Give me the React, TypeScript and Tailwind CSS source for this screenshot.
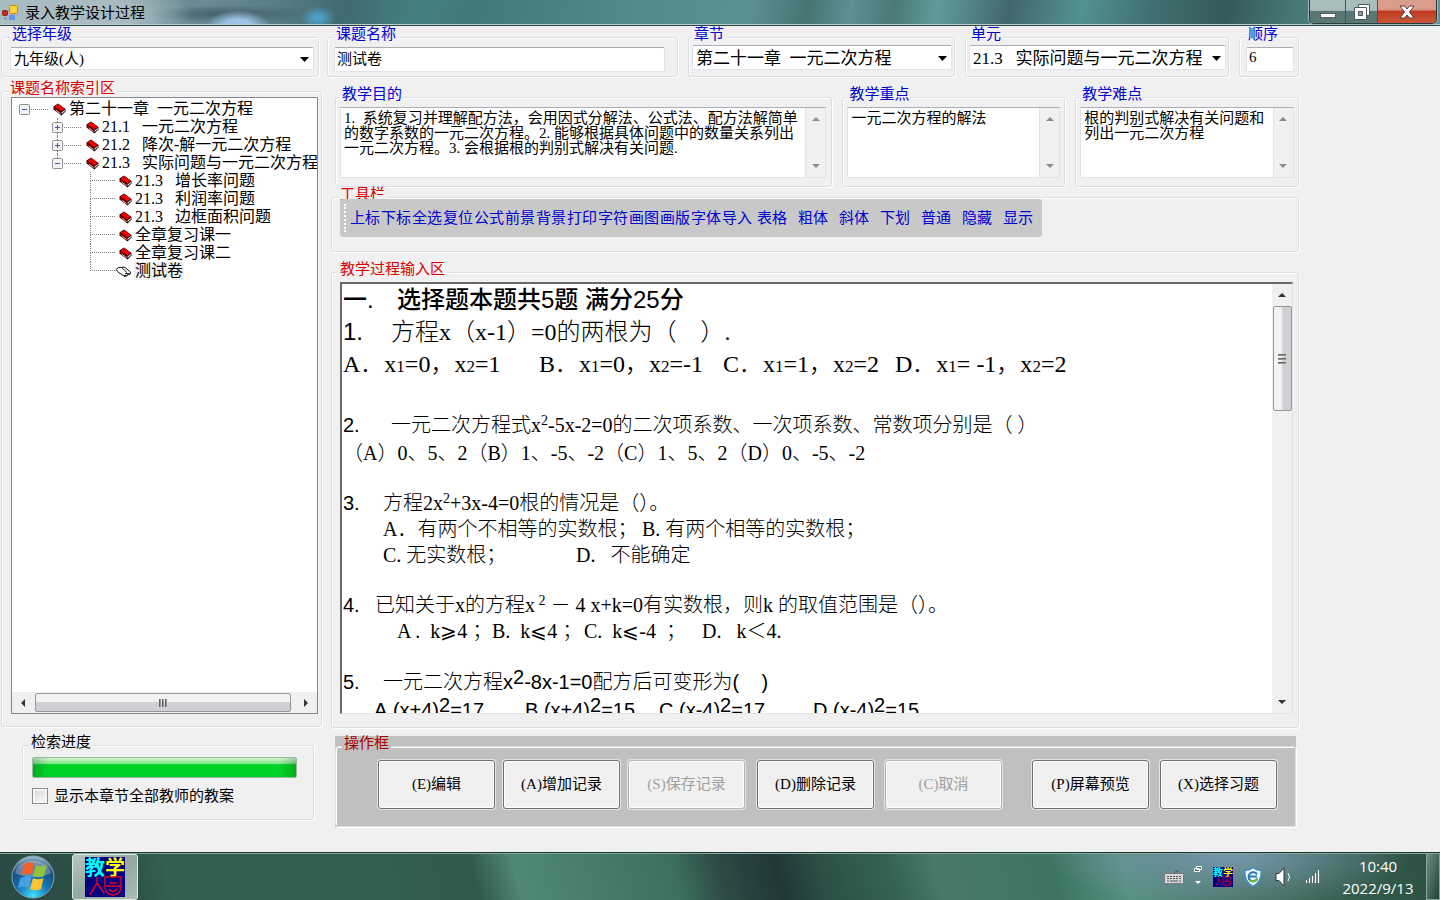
import type { ReactNode } from "react";

const ui = "font-['Liberation_Serif','Noto_Sans_CJK_SC',serif]";
const hei = "font-['Liberation_Sans','Noto_Sans_CJK_SC',sans-serif]";

type Tone = "blue" | "red" | "black" | "darkred";

const tones = {
  blue: "text-[#0000d0]",
  red: "text-[#d80000]",
  black: "text-black",
  darkred: "text-[#a80000]",
};

interface GroupProps {
  title: string;
  tone?: Tone;
  className?: string;
  legendBg?: string;
  children: ReactNode;
}

function Group({ title, tone = "blue", className = "", legendBg = "bg-[#f0f0f0]", children }: GroupProps) {
  return (
    <fieldset
      className={`min-w-0 rounded-[3px] border border-[#d5dfe5] px-[6px] shadow-[1px_1px_0_#fff,inset_1px_1px_0_#fff] ${className}`}
    >
      <legend className={`px-[2px] pb-[6px] text-[15px] leading-[14px] ${legendBg} ${tones[tone]}`}>{title}</legend>
      {children}
    </fieldset>
  );
}

const fieldBorder = "border border-[#e2e3ea] border-t-[#abadb3] bg-white";

function Combo({ label, value, className }: { label: string; value: string; className: string }) {
  return (
    <div className="relative">
      <select
        aria-label={label}
        className={`block w-full appearance-none overflow-hidden rounded-[2px] pl-[3px] text-black outline-none ${fieldBorder} ${className}`}
      >
        <option>{value}</option>
      </select>
      <svg className="pointer-events-none absolute top-1/2 right-[5px] -mt-[2px]" width="9" height="5" viewBox="0 0 9 5">
        <path d="M0 0h9L4.5 5z" fill="#000" />
      </svg>
    </div>
  );
}

function Arrow({ dir, muted }: { dir: "up" | "down" | "left" | "right"; muted?: boolean }) {
  const paths = {
    up: "M1 7h8L5 3z",
    down: "M1 3h8L5 7z",
    left: "M7 1v8L3 5z",
    right: "M3 1v8l4-4z",
  };
  return (
    <svg width="10" height="10" viewBox="0 0 10 10">
      <path d={paths[dir]} fill={muted ? "#8a8d90" : "#333"} />
    </svg>
  );
}

function Note({ label, value }: { label: string; value: string }) {
  return (
    <div className={`mb-2 flex h-[71px] ${fieldBorder}`}>
      <textarea
        aria-label={label}
        defaultValue={value}
        wrap="off"
        className="block min-w-0 flex-1 resize-none overflow-hidden pt-[3px] pl-[3px] text-[15px] leading-[15px] text-black outline-none"
      />
      <div className="flex w-5 shrink-0 flex-col items-center justify-between border-l border-[#e3e3e3] bg-[#f0f0f0] py-[6px]">
        <Arrow dir="up" muted />
        <Arrow dir="down" muted />
      </div>
    </div>
  );
}

function Book() {
  return (
    <svg width="13" height="13" viewBox="0 0 13 13" className="shrink-0">
      <path d="M.5 3.500 5 .500l7.500 5.500v2.500L8.500 12.500.5 6.500z" fill="#1a0000" />
      <path d="M1.500 3.500 5.200 1 11.800 6 8.200 8.500z" fill="#f00000" />
      <path d="M8.500 9.500 12 7v1l-3.500 3z" fill="#f4f4f4" />
      <path d="M1.200 4.500 7.600 9.500v1.700L1.200 6.200z" fill="#c80000" />
      <path d="M3 7.300 7.500 10.700" stroke="#ddd" strokeWidth=".8" />
    </svg>
  );
}

function OpenBook() {
  return (
    <svg width="17" height="13" viewBox="0 0 17 13" className="-ml-1 shrink-0">
      <path
        d="M1 4.500Q3 1.500 6.500 2.500 8 1.500 10 2.500l5.500 4.500q.5 2-2.500 2.500-1 1.500-3 1-2 .500-3-1-3-.500-6-5z"
        fill="#fff"
        stroke="#111"
      />
      <path d="M6.500 2.500 12 7.500M10 8.500h3.500M9 11.500q3 0 4-2l2.500-.500" stroke="#111" fill="none" />
    </svg>
  );
}

function Expander({ open, top, bottom }: { open: boolean; top?: boolean; bottom?: boolean }) {
  return (
    <span className="flex h-[18px] w-[11px] shrink-0 flex-col items-center">
      <span className={`h-1 w-px ${top ? "border-l border-dotted border-[#808080]" : ""}`} />
      <svg width="11" height="11" viewBox="0 0 11 11" className="shrink-0">
        <rect x=".5" y=".5" width="10" height="10" rx="1" fill="#f3f3f3" stroke="#919191" />
        <path d={open ? "M3 5.500h5" : "M3 5.500h5M5.500 3v5"} stroke="#3a5ba5" />
      </svg>
      <span className={`h-[3px] w-px ${bottom ? "border-l border-dotted border-[#808080]" : ""}`} />
    </span>
  );
}

const dots = "border-dotted border-[#808080]";

function BranchRow({ open, top, bottom, label }: { open: boolean; top?: boolean; bottom?: boolean; label: string }) {
  return (
    <div className="flex h-[18px] items-center whitespace-nowrap">
      <Expander open={open} top={top} bottom={bottom} />
      <span className={`mr-[5px] ml-px w-[17px] shrink-0 border-t ${dots}`} />
      <Book />
      <span className="ml-[3px]">{label}</span>
    </div>
  );
}

function LeafRow({ label, last }: { label: string; last?: boolean }) {
  return (
    <li className="flex h-[18px] items-center whitespace-nowrap">
      <span className="mr-1 w-[25px] shrink-0">
        <span className={`block h-[9px] border-b border-l ${dots}`} />
        <span className={`block h-[9px] ${last ? "" : `border-l ${dots}`}`} />
      </span>
      {last ? <OpenBook /> : <Book />}
      <span className={last ? "ml-[2px] bg-[#f0f0f0] px-px" : "ml-[3px]"}>{label}</span>
    </li>
  );
}

const leaves = [
  "21.3 \u2002增长率问题",
  "21.3 \u2002利润率问题",
  "21.3 \u2002边框面积问题",
  "全章复习课一",
  "全章复习课二",
  "测试卷",
];

function Tree() {
  return (
    <div className="-mt-1 mr-[-3px] mb-3 ml-[3px] flex min-h-0 flex-1 flex-col border border-[#828790] bg-white">
      <ul className="min-h-0 flex-1 overflow-hidden pt-[2px] pl-[7px] text-[16px] leading-[18px]">
        <li>
          <BranchRow open label={"第二十一章\u2002一元二次方程"} />
          <ul className="pl-[33px]">
            <li>
              <BranchRow open={false} top bottom label={"21.1 \u2002一元二次方程"} />
            </li>
            <li>
              <BranchRow open={false} top bottom label={"21.2 \u2002降次-解一元二次方程"} />
            </li>
            <li>
              <BranchRow open top label={"21.3 \u2002实际问题与一元二次方程"} />
              <ul className="pl-[38px]">
                {leaves.map((leaf, i) => (
                  <LeafRow key={leaf} label={leaf} last={i === leaves.length - 1} />
                ))}
              </ul>
            </li>
          </ul>
        </li>
      </ul>
      <div className="flex h-[21px] shrink-0 items-center bg-[#f0f0f0] px-[6px]">
        <Arrow dir="left" />
        <div className="mr-[10px] ml-[7px] flex h-[19px] flex-1 items-center justify-center gap-px rounded-[2px] border border-[#979797] bg-linear-to-b from-[#f3f3f3] from-45% to-[#cfd0d3] to-50%">
          <span className="h-2 w-[2px] border-r border-[#999] bg-[#666]" />
          <span className="h-2 w-[2px] border-r border-[#999] bg-[#666]" />
          <span className="h-2 w-[2px] border-r border-[#999] bg-[#666]" />
        </div>
        <Arrow dir="right" />
      </div>
    </div>
  );
}

const tightTools = ["上标", "下标", "全选", "复位", "公式", "前景", "背景", "打印", "字符", "画图", "画版", "字体", "导入"];
const looseTools = ["表格", "粗体", "斜体", "下划", "普通", "隐藏", "显示"];

function Toolbar() {
  return (
    <div className="relative -mt-2 mb-[14px] ml-[2px] flex h-[38px] w-[702px] items-center rounded-[3px] bg-[#c8c8c8] pl-1 text-[15px] leading-5 text-[#0000d0]">
      <span className="mr-1 h-[28px] border-l-2 border-dotted border-white" />
      <div className="flex gap-px">
        {tightTools.map((t) => (
          <button key={t} type="button" className="w-[30px] whitespace-nowrap">
            {t}
          </button>
        ))}
      </div>
      <div className="ml-[5px] flex gap-[11px]">
        {looseTools.map((t) => (
          <button key={t} type="button" className="w-[30px] whitespace-nowrap">
            {t}
          </button>
        ))}
      </div>
    </div>
  );
}

function Sub({ children }: { children: ReactNode }) {
  return <span className="text-[17px]">{children}</span>;
}

function Sup({ children }: { children: ReactNode }) {
  return <sup className="text-[14px]">{children}</sup>;
}

function BigSup({ children }: { children: ReactNode }) {
  return <sup className="-top-[5px] text-[20px]">{children}</sup>;
}

interface LineProps {
  no?: string;
  indent?: string;
  className?: string;
  children?: ReactNode;
}

function Line({ no, indent = "w-10", className = "h-[26px] leading-[26px] text-[20px]", children }: LineProps) {
  return (
    <p className={`flex whitespace-pre ${className}`}>
      <span className={`shrink-0 ${indent} ${hei}`}>{no}</span>
      {children}
    </p>
  );
}

function Editor() {
  return (
    <div className="mr-[-1px] mb-[13px] ml-[2px] flex min-h-0 flex-1 border-t-2 border-r border-b border-l-2 border-t-[#696969] border-r-[#e3e3e3] border-b-[#e3e3e3] border-l-[#696969] bg-white">
      <div
        role="textbox"
        aria-label="教学过程输入区"
        tabIndex={0}
        className="min-h-0 min-w-0 flex-1 overflow-hidden pl-px font-light text-black"
      >
        <Line no="一." indent="w-[54px]" className={`h-8 text-[24px] leading-8 font-medium ${hei}`}>
          选择题本题共5题 满分25分
        </Line>
        <Line no="1." indent="w-12" className="h-8 text-[24px] leading-8">
          方程x（x-1）=0的两根为（    ）.
        </Line>
        <Line indent="w-0" className="h-8 text-[24px] leading-8">
          <span className="w-[196px]">A．x<Sub>1</Sub>=0，x<Sub>2</Sub>=1</span>
          <span className="w-[184px]">B．x<Sub>1</Sub>=0，x<Sub>2</Sub>=-1</span>
          <span className="w-[172px]">C．x<Sub>1</Sub>=1，x<Sub>2</Sub>=2</span>
          <span>D．x<Sub>1</Sub>= -1，x<Sub>2</Sub>=2</span>
        </Line>
        <Line indent="w-0" className="h-[30px]" />
        <Line no="2." indent="w-12" className="h-[30px] text-[20px] leading-[30px]">
          <span>一元二次方程式x<Sup>2</Sup>-5x-2=0的二次项系数、一次项系数、常数项分别是（ ）</span>
        </Line>
        <Line indent="w-0">（A）0、5、2（B）1、-5、-2（C）1、5、2（D）0、-5、-2</Line>
        <Line indent="w-0" className="h-6" />
        <Line no="3.">
          <span>方程2x<Sup>2</Sup>+3x-4=0根的情况是（）。</span>
        </Line>
        <Line>
          <span className="w-[259px]">A．有两个不相等的实数根；</span>
          <span>B. 有两个相等的实数根；</span>
        </Line>
        <Line>
          <span className="w-[193px]">C. 无实数根；</span>
          <span>D.   不能确定</span>
        </Line>
        <Line indent="w-0" className="h-6" />
        <Line no="4." indent="w-8">
          <span>已知关于x的方程x<Sup> 2</Sup> － 4 x+k=0有实数根，则k 的取值范围是（）。</span>
        </Line>
        <Line indent="w-[54px]">
          <span className="w-[95px]">A .  k⩾4 ；</span>
          <span className="w-[92px]">B.  k⩽4 ；</span>
          <span className="w-[118px]">C.  k⩽-4  ；</span>
          <span>D.   k＜4.</span>
        </Line>
        <Line indent="w-0" className="h-6" />
        <Line no="5." className="h-7 text-[20px] leading-7">
          <span className={hei}>一元二次方程x<BigSup>2</BigSup>-8x-1=0配方后可变形为(    )</span>
        </Line>
        <Line indent="w-[31px]" className={`h-7 text-[20px] leading-7 ${hei}`}>
          <span className="w-[151px]">A.(x+4)<BigSup>2</BigSup>=17</span>
          <span className="w-[134px]">B.(x+4)<BigSup>2</BigSup>=15</span>
          <span className="w-[154px]">C.(x-4)<BigSup>2</BigSup>=17</span>
          <span>D.(x-4)<BigSup>2</BigSup>=15</span>
        </Line>
      </div>
      <div className="flex w-5 shrink-0 flex-col items-center bg-[#f0f0f0] py-[6px]">
        <Arrow dir="up" />
        <div className="mt-[6px] mb-auto flex h-[105px] w-[19px] flex-col items-center justify-center gap-[2px] rounded-[2px] border border-[#979797] bg-linear-to-r from-[#f3f3f3] from-40% to-[#cfd0d3] to-55%">
          <span className="h-[2px] w-2 border-b border-[#999] bg-[#666]" />
          <span className="h-[2px] w-2 border-b border-[#999] bg-[#666]" />
          <span className="h-[2px] w-2 border-b border-[#999] bg-[#666]" />
        </div>
        <Arrow dir="down" />
      </div>
    </div>
  );
}

function Action({ label, disabled }: { label: string; disabled?: boolean }) {
  return (
    <button
      type="button"
      disabled={disabled}
      className="h-[49px] w-[117px] rounded-[3px] border border-[#707070] bg-[#f0f0f0] text-[15px] text-black shadow-[0_0_0_1px_#e4e4e4,inset_0_0_0_1px_#fff] disabled:border-[#b4b4b4] disabled:text-[#a0a0a0]"
    >
      {label}
    </button>
  );
}

function TeachIcon({ size }: { size: number }) {
  return (
    <svg width={size} height={size} viewBox="0 0 40 40" className="shrink-0">
      <rect width="40" height="40" fill="#000080" />
      <g fontFamily="Noto Sans CJK SC, sans-serif" fontWeight="700" fontSize="20">
        <text x="0" y="18" fill="#00ffff">教</text>
        <text x="20" y="18" fill="#ffff00">学</text>
      </g>
      <path d="M12 20v6M12 26 5 38M12 26l7 10M20 20v10a8 8 0 0 0 16 0V20zM21 29h14M24 26h8M24 32q4 5 8 0" stroke="#e00020" strokeWidth="1.500" fill="none" />
    </svg>
  );
}

function TitleBar() {
  return (
    <header className="flex h-[26px] shrink-0 items-start border-b border-[#2c4446] bg-[radial-gradient(ellipse_130px_40px_at_60px_14px,#a9bcc1_55%,transparent),radial-gradient(ellipse_32px_16px_at_238px_26px,#9cc3e8_40%,transparent),radial-gradient(ellipse_18px_12px_at_318px_18px,#4f9fc4_20%,transparent),radial-gradient(ellipse_90px_9px_at_230px_14px,#47666f_20%,transparent),linear-gradient(100deg,#91a9ae_0%,#75949b_10%,#5d818b_18%,#3f6a72_24%,#44807b_29%,#427875_33%,#528989_44%,#5b9190_52%,#457573_56%,#5b9190_59%,#4a7977_62%,#609b99_65%,#42676b_70%,#52928f_75%,#3f6f6e_80%,#36595b_85%,#477a77_90%,#6d9090_100%)] shadow-[inset_0_-1px_0_#b8d0d0]">
      <svg width="17" height="18" viewBox="0 0 17 18" className="mt-1 ml-[2px]">
        <rect x="7.500" y="1.500" width="8" height="8" rx="1" fill="#ffd23c" stroke="#b88b20" />
        <rect x=".5" y="6.500" width="5" height="5" rx="1" fill="#c8281e" stroke="#8c2420" />
        <rect x="7" y="11" width="6" height="5" rx="1" fill="#5a96ea" />
        <rect x="2" y="13" width="3" height="3" fill="#8d9fae" />
      </svg>
      <h1 className="ml-[6px] text-[15px] leading-[26px] text-black">录入教学设计过程</h1>
      <div className="mr-[3px] ml-auto flex h-6 overflow-hidden rounded-b-[5px] border border-t-0 border-[#253c40] shadow-[0_0_0_1px_#9dbabb]">
        <button type="button" aria-label="最小化" className="flex w-9 items-center justify-center border-r border-[#3d5558] bg-linear-to-b from-[#a9bdbd] from-45% to-[#587776] to-50%">
          <svg width="18" height="18" viewBox="0 0 18 18">
            <rect x="1.500" y="10.500" width="15" height="4" fill="#fff" stroke="#53605f" />
          </svg>
        </button>
        <button type="button" aria-label="还原" className="flex w-8 items-center justify-center border-r border-[#3d5558] bg-linear-to-b from-[#a9bdbd] from-45% to-[#587776] to-50%">
          <svg width="18" height="18" viewBox="0 0 18 18">
            <path d="M5.500 1.500h11v11h-11z" fill="#fff" stroke="#4a5859" />
            <path d="M1.500 4.500h12v12h-12z" fill="#fff" stroke="#4a5859" />
            <path d="M5.500 8.500h4v4h-4z" fill="#87a0a0" stroke="#4a5859" />
          </svg>
        </button>
        <button type="button" aria-label="关闭" className="flex w-[58px] items-center justify-center bg-linear-to-b from-[#dc9c8c] from-40% via-[#c03a20] via-50% to-[#c8563a]">
          <svg width="16" height="14" viewBox="0 0 16 14">
            <path d="M1 1h4.500L8 4l2.500-3H15l-4.500 6L15 13h-4.500L8 10l-2.500 3H1l4.500-6z" fill="#fff" stroke="#5c3a38" />
          </svg>
        </button>
      </div>
    </header>
  );
}

function TaskBar() {
  return (
    <footer className="flex h-12 shrink-0 items-center border-t border-[#1c3632] bg-[radial-gradient(ellipse_180px_60px_at_1230px_0px,#7395a8_10%,transparent),linear-gradient(75deg,#2a4b43_0%,#2c5047_9%,#33604f_12%,#325e50_28%,#30584b_33%,#4f8873_36%,#447c67_42%,#3b705d_47%,#2e4a46_50%,#213638_54%,#2b4f45_57%,#356453_62%,#477a67_65%,#3d7562_73%,#559181_78%,#45705f_85%,#37604f_91%,#2a5042_100%)] shadow-[inset_0_1px_0_#86a49b]">
      <button type="button" aria-label="开始" className="ml-[11px]">
        <svg width="44" height="44" viewBox="0 0 44 44">
          <defs>
            <radialGradient id="orb" cx=".5" cy=".95" r=".95">
              <stop offset="0" stopColor="#3fe0ff" />
              <stop offset=".4" stopColor="#1576b4" />
              <stop offset=".75" stopColor="#1c4a78" />
              <stop offset="1" stopColor="#a9c4d4" />
            </radialGradient>
          </defs>
          <circle cx="22" cy="22" r="21" fill="url(#orb)" stroke="#7ea6b4" />
          <path d="M4 18a18.500 16 0 0 1 36 0Q22 26 4 18z" fill="#fff" opacity=".3" />
          <path d="M13 9q5-3 10-.5L21 20q-6-2.500-11 .5z" fill="#f0622a" />
          <path d="M25 10q5 2.500 11-.5L33 21q-5 2.500-11 0z" fill="#8fc43c" />
          <path d="M9.500 23q6-3 11-.5L18 33Q13 30.500 7 33z" fill="#4aa0e4" />
          <path d="M22 23q5 2.500 10.500 0L30 34q-6 2.500-11 0z" fill="#fdc530" />
        </svg>
      </button>
      <button
        type="button"
        aria-label="教学"
        className="ml-[17px] flex h-[46px] w-[66px] items-center justify-center rounded-[3px] border border-[#dfe9e6] bg-linear-to-br from-[#b9c6c2] via-[#93a8a2] to-[#a9bcb6]"
      >
        <TeachIcon size={40} />
      </button>
      <div className="ml-auto flex items-center">
        <svg width="20" height="16" viewBox="0 0 20 16">
          <path d="M10 5q0-3 5-3" stroke="#555" fill="none" />
          <rect x=".5" y="4.500" width="19" height="10" rx="1" fill="#d8d8d8" stroke="#777" />
          <path d="M3 7.500h14M3 9.500h14" stroke="#555" strokeDasharray="2 1" />
          <path d="M3 12h2m1 0h8m1 0h2" stroke="#555" />
        </svg>
        <svg width="10" height="24" viewBox="0 0 10 24" className="ml-[9px]">
          <path d="M3.500 1.500h5v3h-5zM1.500 3.500h5v3h-5z" fill="#3d6a62" stroke="#fff" />
          <path d="M2 16h6l-3 3z" fill="#fff" />
        </svg>
        <span className="ml-[10px]">
          <TeachIcon size={20} />
        </span>
        <svg width="20" height="20" viewBox="0 0 20 20" className="ml-[10px]">
          <path d="M10 0q4 3 9 3 1 13-9 17Q0 16 1 3q5 0 9-3z" fill="#3c8fc4" />
          <path d="M10 1.500q4 2.500 7.500 2.500.5 10-7.500 14.500Q2 14 2.500 4 6 4 10 1.500z" fill="#f4f8fa" />
          <path d="M14 7.500a4.500 4.500 0 1 0 .3 4M6 9.500h8" stroke="#2a7ab4" strokeWidth="2" fill="none" />
          <path d="M7 13.500q4 2.500 7.300-2" stroke="#6cbc2c" strokeWidth="2" fill="none" />
        </svg>
        <svg width="18" height="20" viewBox="0 0 18 20" className="ml-3">
          <path d="M1 6.500h3L9 1v18l-5-5.500H1z" fill="#fff" stroke="#333" />
          <path d="M13 6q3 4 0 8" stroke="#fff" fill="none" />
        </svg>
        <svg width="16" height="16" viewBox="0 0 16 16" className="ml-3">
          <path d="M.5 10.500h2v4h-2zM3.500 8.500h2v6h-2zM6.500 6.500h2v8h-2zM9.500 3.500h2v11h-2zM12.500.5h2v14h-2z" fill="#fff" stroke="#234" strokeWidth=".5" />
        </svg>
        <time className="mr-px ml-[10px] w-[94px] text-center font-['Open_Sans','Noto_Sans',sans-serif] text-[15px] leading-[22px] text-white">
          10:40
          <br />
          2022/9/13
        </time>
        <span className="h-[47px] w-[14px] border border-[#8aa59c] bg-linear-to-br from-[#6d8f84] to-[#234238]" />
      </div>
    </footer>
  );
}

export default function App() {
  return (
    <div className={`flex h-screen min-h-[700px] flex-col overflow-hidden bg-[#f0f0f0] ${ui}`}>
      <TitleBar />
      <main className="flex min-h-0 flex-1 pt-px pr-[141px]">
        <div className="flex w-[322px] shrink-0 flex-col">
          <Group title="选择年级" className="mr-[3px] ml-px h-[50px] pr-[4px]! pl-[8px]">
            <Combo label="选择年级" value="九年级(人)" className="h-[23px] text-[15px]" />
          </Group>
          <Group title="课题名称索引区" tone="red" className="mt-1 ml-px flex min-h-0 flex-1 flex-col">
            <Tree />
          </Group>
          <Group title="检索进度" tone="black" className="mt-2 mr-2 mb-8 ml-[22px] h-[85px]">
            <div className="mt-[2px] mr-[10px] ml-[3px] h-[21px] rounded-[2px] border border-[#9cb89c] bg-[linear-gradient(90deg,#00000030,transparent_6%,transparent_94%,#00000030),linear-gradient(#c9f5c9_5%,#7be583_30%,#00d327_35%)]" />
            <label className="mt-2 ml-[3px] flex items-center text-[15px] leading-5">
              <input
                type="checkbox"
                className="mr-[6px] size-4 appearance-none border border-[#8e8f8f] bg-linear-to-br from-[#cfd2d6] to-white shadow-[inset_0_0_0_2px_#f4f4f4]"
              />
              显示本章节全部教师的教案
            </label>
          </Group>
        </div>

        <div className="ml-[5px] flex min-w-0 flex-1 flex-col">
          <div className="grid grid-cols-[351fr_267fr_264fr_60fr] gap-[10px]">
            <Group title="课题名称" className="h-[50px]">
              <input
                aria-label="课题名称"
                defaultValue="测试卷"
                className={`block h-[25px] w-[331px] max-w-full rounded-[2px] pb-1 pl-[2px] text-[15px] text-black outline-none ${fieldBorder}`}
              />
            </Group>
            <Group title="章节" className="h-[50px] pr-[2px]! pl-[3px]">
              <Combo label="章节" value={"第二十一章\u2002一元二次方程"} className="-mt-[2px] h-[25px] text-[17px]" />
            </Group>
            <Group title="单元" className="h-[50px] pr-[2px]! pl-[3px]">
              <Combo label="单元" value={"21.3 \u2002实际问题与一元二次方程"} className="-mt-[2px] h-[25px] text-[17px]" />
            </Group>
            <Group title="顺序" className="h-[50px] pr-[4px]!">
              <input
                aria-label="顺序"
                defaultValue="6"
                className={`block h-[25px] w-full rounded-[2px] pb-1 pl-[2px] text-[15px] text-black outline-none ${fieldBorder}`}
              />
            </Group>
          </div>

          <div className="mt-[10px] grid grid-cols-[498fr_223fr_224fr] gap-[10px] pl-[8px]">
            <Group title="教学目的" className="pr-[5px]! pl-1">
              <Note
                label="教学目的"
                value={
                  "1.\u2002系统复习并理解配方法，会用因式分解法、公式法、配方法解简单\n的数字系数的一元二次方程。2. 能够根据具体问题中的数量关系列出\n一元二次方程。3. 会根据根的判别式解决有关问题."
                }
              />
            </Group>
            <Group title="教学重点" className="pr-[4px]! pl-1">
              <Note label="教学重点" value="一元二次方程的解法" />
            </Group>
            <Group title="教学难点" className="pr-[4px]! pl-1">
              <Note label="教学难点" value={"根的判别式解决有关问题和\n列出一元二次方程"} />
            </Group>
          </div>

          <Group title="工具栏" tone="red" className="ml-1">
            <Toolbar />
          </Group>

          <Group title="教学过程输入区" tone="red" className="mt-[10px] ml-1 flex min-h-0 flex-1 flex-col">
            <Editor />
          </Group>

          <div className="mt-2 mr-[3px] mb-[25px] ml-2 bg-[#c0c0c0]">
            <Group title="操作框" tone="darkred" legendBg="bg-[#c0c0c0]" className="h-[91px]">
              <div className="mt-1 mr-[12px] ml-[36px] flex">
                <div className="flex gap-2">
                  <Action label="(E)编辑" />
                  <Action label="(A)增加记录" />
                  <Action label="(S)保存记录" disabled />
                </div>
                <div className="ml-3 flex gap-[11px]">
                  <Action label="(D)删除记录" />
                  <Action label="(C)取消" disabled />
                </div>
                <div className="ml-auto flex gap-[11px]">
                  <Action label="(P)屏幕预览" />
                  <Action label="(X)选择习题" />
                </div>
              </div>
            </Group>
          </div>
        </div>
      </main>
      <TaskBar />
    </div>
  );
}
